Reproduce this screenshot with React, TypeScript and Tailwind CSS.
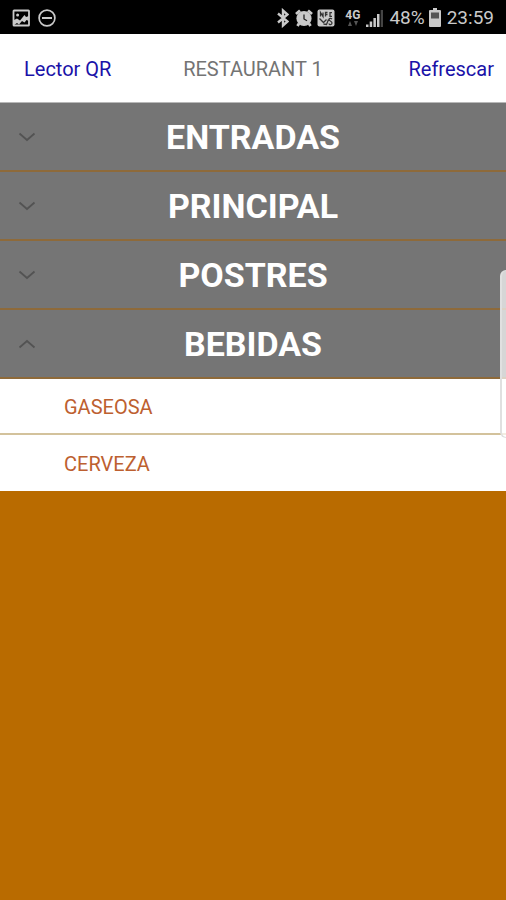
import React, { useState } from "react";
import clsx from "clsx";

interface Category {
  name: string;
  items: string[];
}

const categories: Category[] = [
  { name: "ENTRADAS", items: [] },
  { name: "PRINCIPAL", items: [] },
  { name: "POSTRES", items: [] },
  { name: "BEBIDAS", items: ["GASEOSA", "CERVEZA"] },
];

const StatusBar: React.FC = () => (
  <div className="flex h-[34px] items-center justify-between bg-black px-3 pt-px text-[#cacaca]">
    <div className="flex items-center gap-2">
      {/* Picture */}
      <svg className="h-[18px] w-[18px]" viewBox="0 0 18 18" fill="none">
        <rect x="1.500" y="1.500" width="15.500" height="15" rx="0.6" stroke="currentColor" strokeWidth="1.8" />
        <circle cx="5.600" cy="6" r="1.500" fill="currentColor" />
        <path d="M2 11l3-1.500 3 2L12.500 6 14 8l3-1v5l-2.500-1-2 2.500L10 12l-3 3.500-2-1.500-3 2z" fill="currentColor" />
      </svg>
      {/* Do not disturb */}
      <svg className="h-[18px] w-[18px]" viewBox="0 0 18 18" fill="none" stroke="currentColor">
        <circle cx="9" cy="9" r="7.900" strokeWidth="1.700" />
        <path d="M4 9h10" strokeWidth="2" />
      </svg>
    </div>

    <div className="flex items-center">
      {/* Bluetooth */}
      <svg className="h-[20px] w-[12px]" viewBox="0 0 12 20" fill="none" stroke="currentColor" strokeWidth="2.400">
        <path d="M1 5.500l9.500 8L6 17.500v-15l4.500 4L1 14.500" />
      </svg>
      {/* Alarm */}
      <svg className="ml-[6px] h-[18px] w-[18px]" viewBox="0 0 18 18">
        <path d="M1 5l4-3.500M17 5l-4-3.500M4 14.500L2.500 17M14 14.500l1.500 2.500" stroke="currentColor" strokeWidth="2.800" />
        <circle cx="9" cy="9.500" r="7.600" fill="currentColor" />
        <path d="M9 5.500V10l3 1.800" fill="none" stroke="#222" strokeWidth="1.300" />
      </svg>
      {/* NFC */}
      <svg className="ml-1 h-[18px] w-[18px]" viewBox="0 0 18 18">
        <rect x="0.5" y="0.5" width="17" height="17" rx="2" fill="currentColor" />
        <g fill="none" stroke="#333" strokeWidth="1.300">
          <path d="M3.500 7.500v-4l2.500 4v-4M8.500 7.500v-4h2M8.500 5.500h2M15 3.700h-2v3.600h2" />
          <path d="M2.500 9.500l4 4 3-3M6.500 15l3 .5 2-5M12 14.500c0 1.500 3 1.500 3-.5s-3-2-3-3.500 2-1.500 3-.5" />
        </g>
      </svg>
      <div className="ml-[10px] flex flex-col items-center">
        <span className="text-[12px] font-bold leading-[11px]">4G</span>
        <svg className="h-[5px] w-[12px] text-[#555]" viewBox="0 0 12 5" fill="currentColor">
          <path d="M1 5l2-5 2 5zM7 0h4L9 5z" />
        </svg>
      </div>
      {/* Signal strength */}
      <svg className="ml-[6px] h-[18px] w-[17px]" viewBox="0 0 17 18" fill="currentColor">
        <path d="M0 15.500h2.500V18H0zM3.700 12.500h2.500V18H3.700zM7.400 9h2.500v9H7.400zM11 5h2.500v13H11z" />
        <path d="M14.700 1H17v17h-2.300z" fill="#444" />
      </svg>
      <span className="ml-[6px] text-[19px] leading-[24px]">48%</span>
      {/* Battery */}
      <svg className="ml-1 h-[19px] w-[12px]" viewBox="0 0 12 19">
        <path d="M4 0h4v2h3q1 0 1 1v15q0 1-1 1H1q-1 0-1-1V3q0-1 1-1h3z" fill="currentColor" />
        <rect x="2" y="4.500" width="8" height="6" fill="#555" />
      </svg>
      <time className="ml-[6px] text-[19px] leading-[24px]">23:59</time>
    </div>
  </div>
);

const Chevron: React.FC<{ open: boolean }> = ({ open }) => (
  <svg
    className={clsx("h-[10px] w-[18px] text-[#535353]", open && "rotate-180")}
    viewBox="0 0 18 10"
    fill="none"
    stroke="currentColor"
    strokeWidth="1.800"
  >
    <path d="M1.500 1.500L9 8l7.500-6.500" />
  </svg>
);

export default function App() {
  const [openCategory, setOpenCategory] = useState<string | null>("BEBIDAS");

  return (
    <div className="relative min-h-screen bg-[#b96b00] font-['Roboto',sans-serif]">
      <StatusBar />

      <header className="grid h-[69px] grid-cols-[1fr_auto_1fr] items-center border-b border-[#b8b8b8] bg-white pl-6 pr-3 pt-px text-[20px] leading-[24px]">
        <button type="button" className="justify-self-start text-[#1a12a8]">
          Lector QR
        </button>
        <h1 className="pr-3 text-[#747474]">RESTAURANT 1</h1>
        <button type="button" className="justify-self-end text-[#1a12a8]">
          Refrescar
        </button>
      </header>

      <main>
        {categories.map((category) => {
          const open = openCategory === category.name;

          return (
            <section key={category.name}>
              <button
                type="button"
                aria-expanded={open}
                onClick={() => setOpenCategory(open ? null : category.name)}
                className="grid h-[69px] w-full grid-cols-[36px_1fr_36px] items-center border-b-2 border-[#8e6a3a] bg-[#757575] px-[18px]"
              >
                <Chevron open={open} />
                <span className="text-center text-[34px] font-bold leading-[40px] text-white">{category.name}</span>
              </button>

              {open && (
                <ul className="divide-y-2 divide-[#d3c29c] bg-white">
                  {category.items.map((item) => (
                    <li key={item} className="flex h-14 items-center pl-16 pt-0.5 text-[20px] leading-[24px] text-[#bd6030]">
                      {item}
                    </li>
                  ))}
                </ul>
              )}
            </section>
          );
        })}
      </main>

      {/* Edge panel handle */}
      <div className="absolute right-0 top-[270px] h-[168px] w-[6px] rounded-l-md border-y border-l-2 border-[#e0e0e0] bg-white/70" />
    </div>
  );
}
